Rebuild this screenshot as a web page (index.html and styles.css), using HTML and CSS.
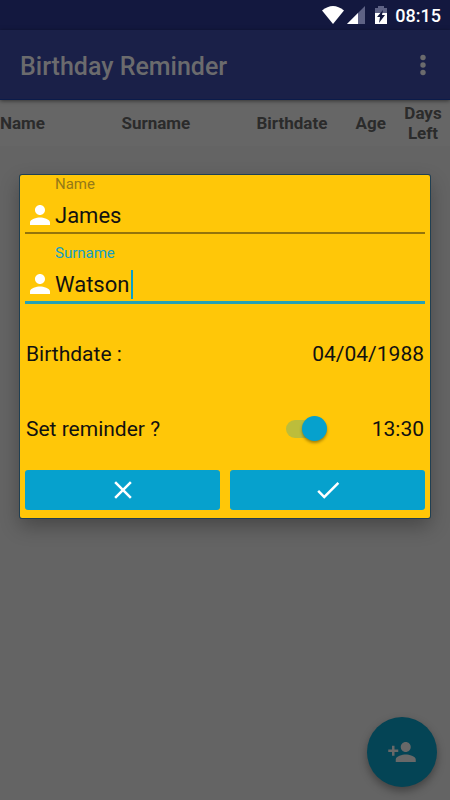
FILE: index.html
```html
<!DOCTYPE html>
<html lang="en">
<head>
<meta charset="utf-8">
<meta name="viewport" content="width=device-width, initial-scale=1">
<title>Birthday Reminder</title>
<link rel="stylesheet" href="styles.css">
</head>
<body>
<div class="status-bar">
  <svg class="status-wifi" viewBox="0 0 22 18" aria-hidden="true"><path d="M0 4.500Q11-4.500 22 4.500L11 18z" fill="#fff"/></svg>
  <svg class="status-signal" viewBox="0 0 18 18" aria-hidden="true"><path d="M18 0v18H0z" fill="#5e6285"/><path d="M11 7v11H0z" fill="#fff"/></svg>
  <svg class="status-battery" viewBox="0 0 12 18" aria-hidden="true"><path d="M0 2h3V0h6v2h3v7H0z" fill="#5e6285"/><path d="M0 7h12v11H0z" fill="#fff"/><path d="M8 4L2 11h3l-1 6 6-8H7z" fill="#13183f"/></svg>
  <span class="clock">08:15</span>
</div>
<header class="app-bar">
  <h1 class="title">Birthday Reminder</h1>
  <button class="menu-button" type="button" aria-label="More options">
    <svg viewBox="0 0 6 20" aria-hidden="true"><circle cx="3" cy="2.500" r="2.700"/><circle cx="3" cy="10" r="2.700"/><circle cx="3" cy="17.500" r="2.700"/></svg>
  </button>
</header>
<main class="content">
  <table class="people">
    <colgroup><col class="col-name"><col class="col-surname"><col class="col-date"><col class="col-age"><col class="col-days"></colgroup>
    <thead><tr><th scope="col">Name</th><th scope="col">Surname</th><th scope="col">Birthdate</th><th scope="col">Age</th><th class="days" scope="col">Days Left</th></tr></thead>
  </table>
</main>
<button class="add-button" type="button" aria-label="Add person">
  <svg viewBox="0 0 24 24" aria-hidden="true"><path d="M15 12c2.210 0 4-1.790 4-4s-1.790-4-4-4-4 1.790-4 4 1.790 4 4 4zm-9-2V7H4v3H1v2h3v3h2v-3h3v-2H6zm9 4c-2.670 0-8 1.340-8 4v2h16v-2c0-2.660-5.330-4-8-4z"/></svg>
</button>
<form class="dialog" role="dialog" aria-label="Edit birthday">
  <div class="field">
    <label class="field-label" for="name">Name</label>
    <div class="field-box">
      <svg class="person" viewBox="0 0 24 24" aria-hidden="true"><path d="M12 12c2.210 0 4-1.790 4-4s-1.790-4-4-4-4 1.790-4 4 1.790 4 4 4zm0 2c-2.670 0-8 1.340-8 4v2h16v-2c0-2.660-5.330-4-8-4z"/></svg>
      <input class="field-input" id="name" type="text" value="James">
    </div>
  </div>
  <div class="field active">
    <label class="field-label" for="surname">Surname</label>
    <div class="field-box">
      <svg class="person" viewBox="0 0 24 24" aria-hidden="true"><path d="M12 12c2.210 0 4-1.790 4-4s-1.790-4-4-4-4 1.790-4 4 1.790 4 4 4zm0 2c-2.670 0-8 1.340-8 4v2h16v-2c0-2.660-5.330-4-8-4z"/></svg>
      <input class="field-input" id="surname" type="text" value="Watson">
      <span class="caret"></span>
    </div>
  </div>
  <div class="rows">
    <div class="row"><span>Birthdate :</span><span class="value">04/04/1988</span></div>
    <div class="row"><label for="reminder">Set reminder ?</label><input class="switch" id="reminder" type="checkbox" role="switch" checked><span class="value time">13:30</span></div>
  </div>
  <div class="actions">
    <button class="action" type="button" aria-label="Cancel"><svg viewBox="0 0 24 24" aria-hidden="true"><path d="M19 6.410L17.590 5 12 10.590 6.410 5 5 6.410 10.590 12 5 17.590 6.410 19 12 13.410 17.590 19 19 17.590 13.410 12z"/></svg></button>
    <button class="action" type="button" aria-label="Save"><svg viewBox="0 0 24 24" aria-hidden="true"><path d="M9 16.170L4.830 12l-1.420 1.410L9 19 21 7l-1.410-1.410z"/></svg></button>
  </div>
</form>
</body>
</html>
```
FILE: styles.css
```css
* { box-sizing: border-box; }

body {
  margin: 0;
  min-height: 100vh;
  position: relative;
  background: #646464;
  font-family: Roboto, sans-serif;
  color: #111;
}

button {
  border: 0;
  padding: 0;
}

.status-bar {
  display: flex;
  align-items: center;
  justify-content: flex-end;
  height: 30px;
  padding-right: 9px;
  background: #13183f;
  color: #fff;
}

.status-wifi { width: 22px; height: 18px; margin-right: 3px; }
.status-signal { width: 18px; height: 18px; margin-right: 10px; }
.status-battery { width: 12px; height: 18px; margin-right: 8px; }
.clock { font-size: 18px; line-height: 30px; font-weight: 500; padding-top: 2px; }

.app-bar {
  position: relative;
  display: flex;
  align-items: center;
  justify-content: space-between;
  height: 70px;
  padding: 0 20px;
  background: #1a2048;
  border-bottom: 1px solid #0b1b4a;
  box-shadow: 0 1px 4px rgba(0, 0, 0, 0.5);
}

.title {
  margin: 0;
  padding-top: 4px;
  font-size: 25px;
  line-height: 30px;
  font-weight: 500;
  color: #6b6b6d;
}

.menu-button {
  width: 14px;
  height: 40px;
  background: none;
}
.menu-button svg { display: block; width: 6px; height: 20px; margin: auto; fill: #6b6b6d; overflow: visible; }

.people {
  width: 100%;
  border-collapse: collapse;
  table-layout: fixed;
  background: #666;
}
.people th {
  height: 46px;
  padding: 0;
  font-size: 17px;
  line-height: 20px;
  font-weight: 700;
  text-align: left;
  color: #2b2b2b;
}
.people .days { text-align: center; }
.col-name { width: 27%; }
.col-surname { width: 30%; }
.col-date { width: 22%; }
.col-age { width: 9%; }
.col-days { width: 12%; }

.add-button {
  position: absolute;
  right: 13px;
  bottom: 13px;
  width: 70px;
  height: 70px;
  border-radius: 50%;
  background: #044455;
  box-shadow: 0 4px 8px rgba(0, 0, 0, 0.35);
}
.add-button svg { display: block; width: 30px; height: 30px; margin: auto; fill: #686868; }

.dialog {
  position: absolute;
  top: 175px;
  left: 20px;
  right: 20px;
  padding: 0 5px 8px;
  border-radius: 2px;
  background: #ffc708;
  box-shadow: 0 0 0 1px #203f52, 0 8px 20px rgba(0, 0, 0, 0.3);
}

.field + .field { margin-top: 10px; }
.field-label {
  display: block;
  margin: 0 0 5px 30px;
  font-size: 15px;
  line-height: 18px;
  color: #957918;
}
.field-box {
  position: relative;
  display: flex;
  align-items: center;
  height: 36px;
  border-bottom: 2px solid #94740b;
}
.person { flex: none; width: 30px; height: 30px; fill: #fff; }
.field-input {
  flex: 1;
  min-width: 0;
  height: 34px;
  padding: 0;
  border: 0;
  outline: 0;
  background: none;
  font: 22px Roboto, sans-serif;
  color: #111;
}
.active .field-label { color: #129fc4; }
.active .field-box { height: 37px; border-bottom: 3px solid #25a2b5; }
.caret {
  position: absolute;
  left: 106px;
  top: 3px;
  width: 2px;
  height: 29px;
  background: #06a1cd;
}

.rows { padding-top: 12px; }
.row {
  display: flex;
  align-items: center;
  height: 75px;
  padding: 0 1px;
  font-size: 21px;
  line-height: 26px;
}
.value { margin-left: auto; }

.switch {
  appearance: none;
  display: flex;
  align-items: center;
  justify-content: flex-end;
  width: 38px;
  height: 18px;
  margin: 0 0 0 auto;
  border-radius: 9px;
  background: #bcbd3b;
}
.switch::before {
  content: "";
  flex: none;
  width: 25px;
  height: 25px;
  margin-right: -3px;
  border-radius: 50%;
  background: #06a1cd;
  box-shadow: 0 2px 3px rgba(0, 0, 0, 0.35);
}
.switch + .time { margin-left: 48px; }

.actions {
  display: flex;
  gap: 10px;
  padding-top: 4px;
}
.action {
  flex: 1;
  height: 40px;
  border-radius: 3px;
  background: #06a1cd;
}
.action svg { display: block; width: 30px; height: 30px; margin: auto; fill: #fff; }
```
